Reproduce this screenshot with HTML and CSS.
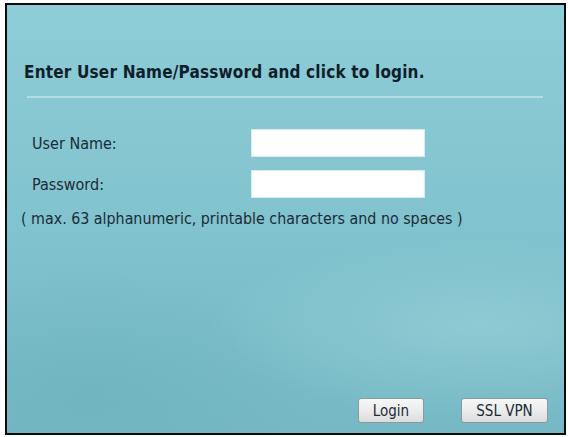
FILE: index.html
```html
<!DOCTYPE html>
<html lang="en">
<head>
    <meta charset="UTF-8">
    <title>Login</title>
    <link rel="stylesheet" href="styles.css">
</head>
<body>
    <div class="frame">
        <form class="login">
            <h2 class="title">Enter User Name/Password and click to login.</h2>
            <hr class="rule">

            <div class="fields">
                <label for="username">User Name:</label>
                <input type="text" id="username" name="username">

                <label for="password">Password:</label>
                <input type="password" id="password" name="password">
            </div>
            <p class="hint">( max. 63 alphanumeric, printable characters and no spaces )</p>

            <div class="actions">
                <button type="submit" class="btn btn-login">Login</button>
                <button type="button" class="btn btn-vpn">SSL VPN</button>
            </div>
        </form>
    </div>
</body>
</html>
```

FILE: styles.css
```css
body {
    margin: 0;
    background-color: #fff;
    font-family: "DejaVu Sans Condensed", "DejaVu Sans", sans-serif;
    color: #1b2b36;
}
.frame {
    box-sizing: border-box;
    width: 561px;
    height: 432px;
    margin: 3px 0 0 5px;
    border: 2px solid #0a0a0a;
    background:
        radial-gradient(ellipse 70% 30% at 85% 75%, rgba(160, 214, 222, 0.5), rgba(160, 214, 222, 0) 70%),
        radial-gradient(ellipse 60% 40% at 15% 90%, rgba(100, 170, 180, 0.35), rgba(100, 170, 180, 0) 70%),
        linear-gradient(180deg, #8dcdd8 0%, #85c6d1 35%, #7cbfca 70%, #76b9c4 100%);
}
.login {
    display: flex;
    flex-direction: column;
    height: 100%;
    padding: 57px 16px 10px 0;
    box-sizing: border-box;
}
.title {
    margin: 0 0 0 17px;
    font-size: 17px;
    line-height: 20px;
    letter-spacing: 0.18px;
    font-weight: bold;
    color: #0f1e2b;
}
.rule {
    margin: 14px 5px 0 20px;
    height: 0;
    border: none;
    border-top: 2px solid #b3dee6;
}
.fields {
    display: grid;
    grid-template-columns: 219px 174px;
    row-gap: 13px;
    align-items: center;
    margin: 31px 0 0 25px;
}
.fields label {
    font-size: 16px;
}
.fields input {
    box-sizing: border-box;
    height: 28px;
    width: 174px;
    border: 1px solid #d6eef2;
    background-color: #fff;
    padding: 2px 4px;
}
.hint {
    margin: 11px 0 0 14px;
    font-size: 15.85px;
    line-height: 19px;
}
.actions {
    margin-top: auto;
    display: flex;
    justify-content: flex-end;
    gap: 37px;
}
.btn {
    height: 25px;
    font-family: inherit;
    font-size: 15px;
    color: #1b2b36;
    border: 1px solid #8a9a9e;
    border-radius: 3px;
    background: linear-gradient(180deg, #f7f7f7 0%, #ececec 50%, #dcdcdc 100%);
    cursor: pointer;
    padding: 0;
}
.btn-login {
    width: 66px;
}
.btn-vpn {
    width: 87px;
}
```
